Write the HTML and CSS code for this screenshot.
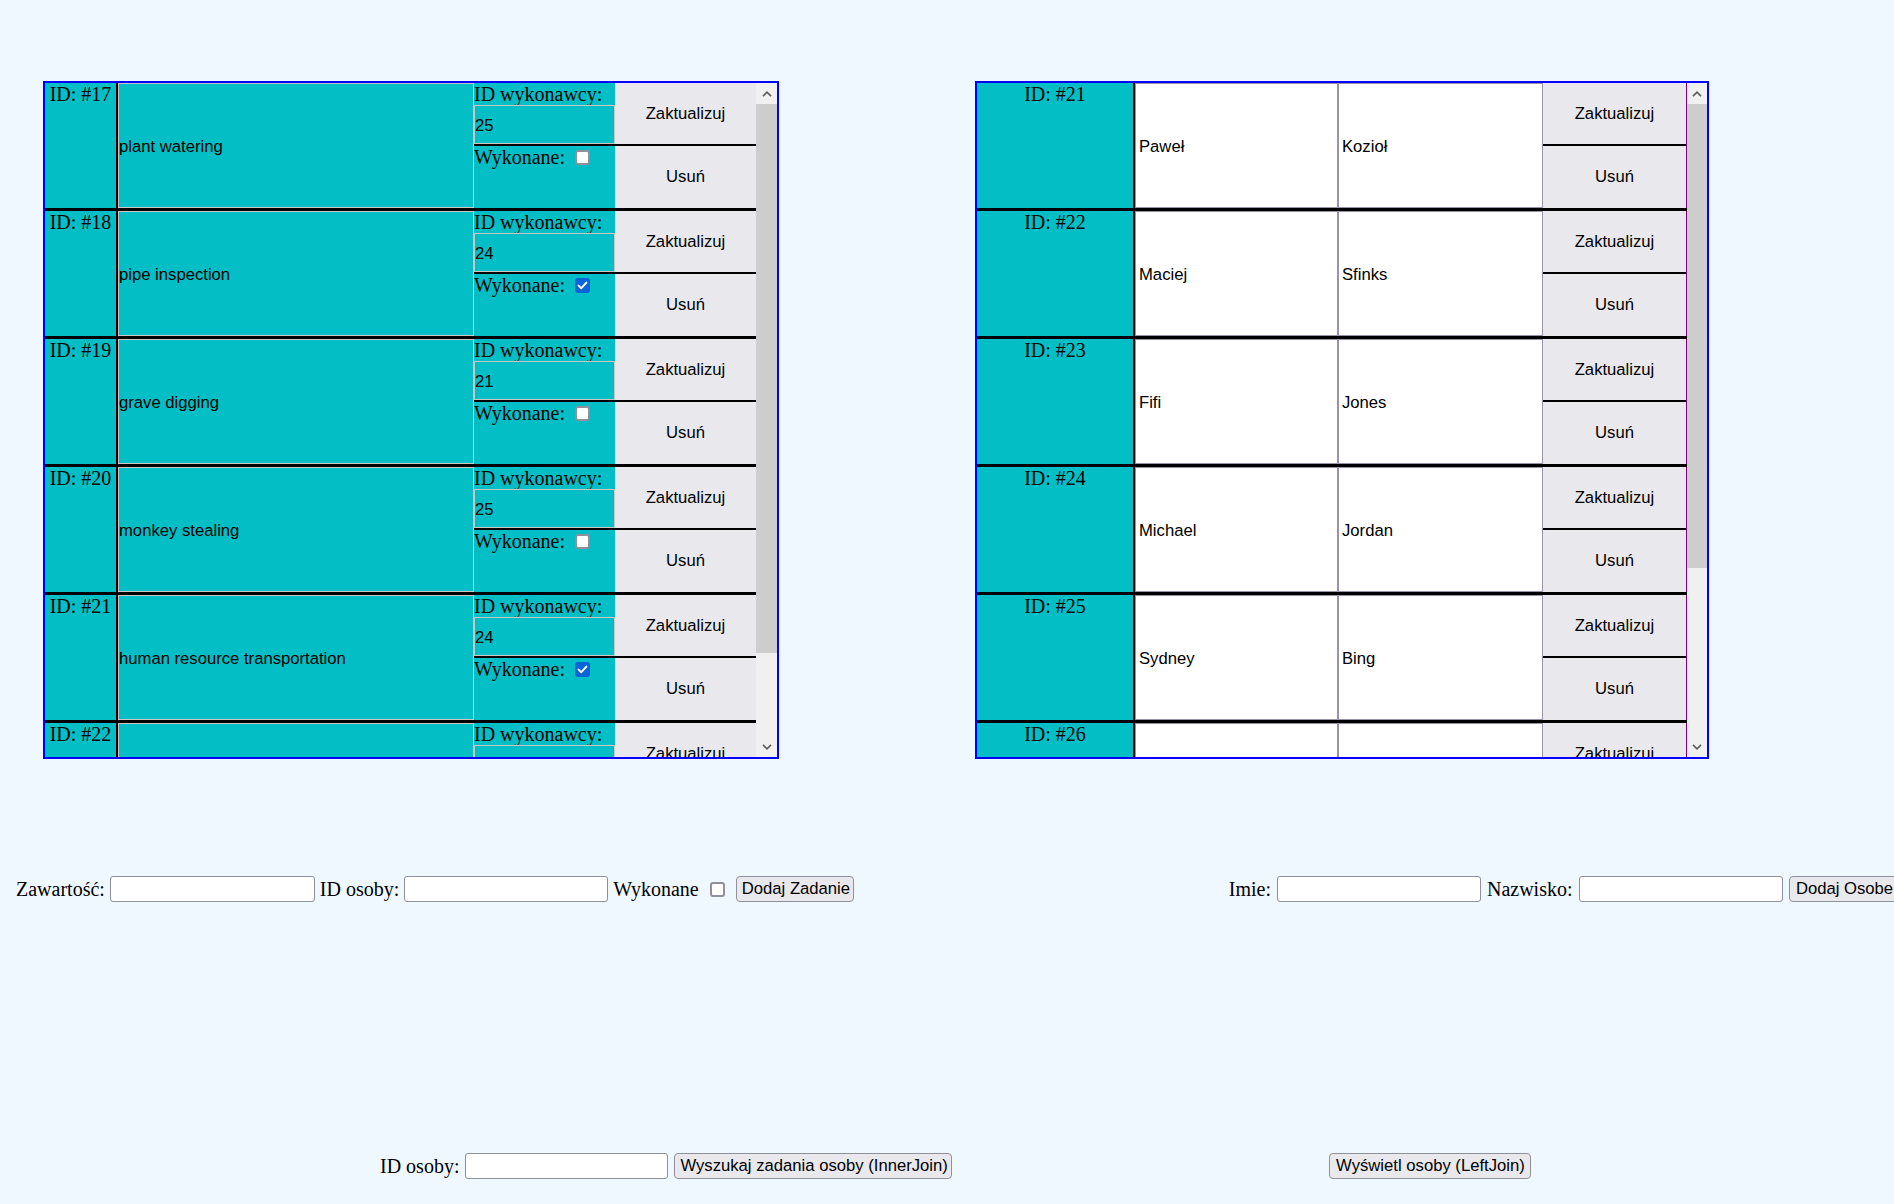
FILE: index.html
```html
<!DOCTYPE html>
<html lang="pl">
<head>
<meta charset="utf-8">
<title>Zadania i osoby</title>
<link rel="stylesheet" href="styles.css">
</head>
<body>
<div class="panels">
  <section class="panel panel-tasks">
    <div class="scroll">
      <div class="trow">
        <div class="tid">ID: #17</div>
        <input class="tin tin-content" value="plant watering">
        <div class="tside">
          <div class="half half-top">
            <div class="mid"><div class="lbl">ID wykonawcy:</div><input class="tin tin-id" value="25"></div>
            <button class="cellbtn">Zaktualizuj</button>
          </div>
          <div class="half half-bottom">
            <div class="mid mid-done"><span class="lbl">Wykonane:</span><span class="cb"></span></div>
            <button class="cellbtn">Usuń</button>
          </div>
        </div>
      </div>
      <div class="trow">
        <div class="tid">ID: #18</div>
        <input class="tin tin-content" value="pipe inspection">
        <div class="tside">
          <div class="half half-top">
            <div class="mid"><div class="lbl">ID wykonawcy:</div><input class="tin tin-id" value="24"></div>
            <button class="cellbtn">Zaktualizuj</button>
          </div>
          <div class="half half-bottom">
            <div class="mid mid-done"><span class="lbl">Wykonane:</span><span class="cb cb-on"><svg width="15" height="15" viewBox="0 0 15 15"><path d="M3.6 7.6 L6.3 10.2 L11.4 4.6" fill="none" stroke="#fff" stroke-width="2" stroke-linecap="round" stroke-linejoin="round"/></svg></span></div>
            <button class="cellbtn">Usuń</button>
          </div>
        </div>
      </div>
      <div class="trow">
        <div class="tid">ID: #19</div>
        <input class="tin tin-content" value="grave digging">
        <div class="tside">
          <div class="half half-top">
            <div class="mid"><div class="lbl">ID wykonawcy:</div><input class="tin tin-id" value="21"></div>
            <button class="cellbtn">Zaktualizuj</button>
          </div>
          <div class="half half-bottom">
            <div class="mid mid-done"><span class="lbl">Wykonane:</span><span class="cb"></span></div>
            <button class="cellbtn">Usuń</button>
          </div>
        </div>
      </div>
      <div class="trow">
        <div class="tid">ID: #20</div>
        <input class="tin tin-content" value="monkey stealing">
        <div class="tside">
          <div class="half half-top">
            <div class="mid"><div class="lbl">ID wykonawcy:</div><input class="tin tin-id" value="25"></div>
            <button class="cellbtn">Zaktualizuj</button>
          </div>
          <div class="half half-bottom">
            <div class="mid mid-done"><span class="lbl">Wykonane:</span><span class="cb"></span></div>
            <button class="cellbtn">Usuń</button>
          </div>
        </div>
      </div>
      <div class="trow">
        <div class="tid">ID: #21</div>
        <input class="tin tin-content" value="human resource transportation">
        <div class="tside">
          <div class="half half-top">
            <div class="mid"><div class="lbl">ID wykonawcy:</div><input class="tin tin-id" value="24"></div>
            <button class="cellbtn">Zaktualizuj</button>
          </div>
          <div class="half half-bottom">
            <div class="mid mid-done"><span class="lbl">Wykonane:</span><span class="cb cb-on"><svg width="15" height="15" viewBox="0 0 15 15"><path d="M3.6 7.6 L6.3 10.2 L11.4 4.6" fill="none" stroke="#fff" stroke-width="2" stroke-linecap="round" stroke-linejoin="round"/></svg></span></div>
            <button class="cellbtn">Usuń</button>
          </div>
        </div>
      </div>
      <div class="trow">
        <div class="tid">ID: #22</div>
        <input class="tin tin-content" value="">
        <div class="tside">
          <div class="half half-top">
            <div class="mid"><div class="lbl">ID wykonawcy:</div><input class="tin tin-id" value=""></div>
            <button class="cellbtn">Zaktualizuj</button>
          </div>
          <div class="half half-bottom">
            <div class="mid mid-done"><span class="lbl">Wykonane:</span><span class="cb"></span></div>
            <button class="cellbtn">Usuń</button>
          </div>
        </div>
      </div>
    </div>
    <div class="sbar">
      <div class="sb-arrow"><svg width="10" height="6" viewBox="0 0 10 6"><path d="M1 5.2 L5 1.2 L9 5.2" fill="none" stroke="#606060" stroke-width="1.7"/></svg></div>
      <div class="sb-track"><div class="sb-thumb thumb-tasks"></div></div>
      <div class="sb-arrow"><svg width="10" height="6" viewBox="0 0 10 6"><path d="M1 0.8 L5 4.8 L9 0.8" fill="none" stroke="#606060" stroke-width="1.7"/></svg></div>
    </div>
  </section>

  <section class="panel panel-people">
    <div class="scroll">
      <div class="prow">
        <div class="pid">ID: #21</div>
        <input class="pin pin-first" value="Paweł">
        <input class="pin pin-last" value="Kozioł">
        <div class="pbtns"><button class="cellbtn pb-top">Zaktualizuj</button><button class="cellbtn pb-bottom">Usuń</button></div>
      </div>
      <div class="prow">
        <div class="pid">ID: #22</div>
        <input class="pin pin-first" value="Maciej">
        <input class="pin pin-last" value="Sfinks">
        <div class="pbtns"><button class="cellbtn pb-top">Zaktualizuj</button><button class="cellbtn pb-bottom">Usuń</button></div>
      </div>
      <div class="prow">
        <div class="pid">ID: #23</div>
        <input class="pin pin-first" value="Fifi">
        <input class="pin pin-last" value="Jones">
        <div class="pbtns"><button class="cellbtn pb-top">Zaktualizuj</button><button class="cellbtn pb-bottom">Usuń</button></div>
      </div>
      <div class="prow">
        <div class="pid">ID: #24</div>
        <input class="pin pin-first" value="Michael">
        <input class="pin pin-last" value="Jordan">
        <div class="pbtns"><button class="cellbtn pb-top">Zaktualizuj</button><button class="cellbtn pb-bottom">Usuń</button></div>
      </div>
      <div class="prow">
        <div class="pid">ID: #25</div>
        <input class="pin pin-first" value="Sydney">
        <input class="pin pin-last" value="Bing">
        <div class="pbtns"><button class="cellbtn pb-top">Zaktualizuj</button><button class="cellbtn pb-bottom">Usuń</button></div>
      </div>
      <div class="prow">
        <div class="pid">ID: #26</div>
        <input class="pin pin-first" value="">
        <input class="pin pin-last" value="">
        <div class="pbtns"><button class="cellbtn pb-top">Zaktualizuj</button><button class="cellbtn pb-bottom">Usuń</button></div>
      </div>
    </div>
    <div class="sbar sbar-people">
      <div class="sb-arrow"><svg width="10" height="6" viewBox="0 0 10 6"><path d="M1 5.2 L5 1.2 L9 5.2" fill="none" stroke="#606060" stroke-width="1.7"/></svg></div>
      <div class="sb-track"><div class="sb-thumb thumb-people"></div></div>
      <div class="sb-arrow"><svg width="10" height="6" viewBox="0 0 10 6"><path d="M1 0.8 L5 4.8 L9 0.8" fill="none" stroke="#606060" stroke-width="1.7"/></svg></div>
    </div>
  </section>
</div>

<div class="forms">
  <form class="form form-task">
    <label class="flabel">Zawartość:</label>
    <input class="field field-content" type="text">
    <label class="flabel">ID osoby:</label>
    <input class="field field-pid" type="text">
    <label class="flabel">Wykonane</label>
    <span class="cb cb-form"></span>
    <button type="button" class="btn btn-add-task">Dodaj Zadanie</button>
  </form>
  <form class="form form-person">
    <label class="flabel">Imie:</label>
    <input class="field field-first" type="text">
    <label class="flabel">Nazwisko:</label>
    <input class="field field-last" type="text">
    <button type="button" class="btn btn-add-person">Dodaj Osobe</button>
  </form>
</div>

<div class="queries">
  <form class="form form-search">
    <label class="flabel">ID osoby:</label>
    <input class="field field-search" type="text">
    <button type="button" class="btn btn-inner">Wyszukaj zadania osoby (InnerJoin)</button>
  </form>
  <button type="button" class="btn btn-left">Wyświetl osoby (LeftJoin)</button>
</div>
</body>
</html>
```

FILE: styles.css
```css
* { box-sizing: border-box; }

html, body { margin: 0; padding: 0; }

body {
  width: 1894px;
  height: 1204px;
  overflow: hidden;
  background: #f0f8ff;
  color: #000;
  font-family: "Liberation Serif", "Times New Roman", serif;
  font-size: 20px;
}

input, button {
  font-family: "Liberation Sans", Arial, sans-serif;
  font-size: 16.67px;
  color: #000;
  margin: 0;
}

/* ---------- panels ---------- */
.panels {
  display: flex;
  align-items: flex-start;
  gap: 196px;
  padding: 81px 0 0 43px;
}

.panel {
  display: flex;
  height: 678px;
  border: 2px solid #0000ff;
}

.panel-tasks { width: 736px; }
.panel-people { width: 734px; }

.scroll {
  flex: 1;
  min-width: 0;
  overflow: hidden;
}

/* fake Windows-style scrollbar */
.sbar {
  width: 21px;
  flex: none;
  display: flex;
  flex-direction: column;
  background: #f0f0f0;
}
.sbar-people { width: 20px; }

.sb-arrow {
  height: 21px;
  flex: none;
  display: flex;
  align-items: center;
  justify-content: center;
}
.sb-track { flex: 1; }
.sb-thumb { background: #cdcdcd; }
.thumb-tasks { height: 549px; }
.thumb-people { height: 464px; }

/* ---------- task rows ---------- */
.trow {
  display: flex;
  height: 128px;
  border-bottom: 3px solid #000;
  background: #04bec6;
}

.tid {
  width: 73px;
  flex: none;
  border-right: 2px solid #000;
  text-align: center;
  line-height: 22px;
  white-space: nowrap;
}

.tin {
  display: block;
  background: #04bec6;
  border: 1px solid #c6c6c6;
  padding: 0;
  outline: none;
}

.tin-content {
  width: 356px;
  height: 125px;
  flex: none;
  padding-top: 2px;
}

.tside {
  width: 282px;
  flex: none;
  display: flex;
  flex-direction: column;
}

.half { display: flex; }
.half-top {
  height: 63px;
  border-bottom: 2px solid #000;
}
.half-bottom { height: 62px; }

.mid {
  width: 141px;
  flex: none;
  display: flex;
  flex-direction: column;
}

.lbl {
  line-height: 22px;
  white-space: nowrap;
}

.tin-id {
  width: 141px;
  height: 39px;
  padding-top: 3px;
}

.mid-done {
  flex-direction: row;
  align-items: center;
  height: 22px;
}

.cellbtn {
  flex: 1;
  border: none;
  background: #e9e9ed;
  padding: 0;
}

/* ---------- checkboxes ---------- */
.cb {
  display: inline-block;
  width: 15px;
  height: 15px;
  margin-left: 10px;
  border: 2px solid #8f8f9d;
  border-radius: 3px;
  background: #fff;
  flex: none;
}
.cb-on {
  border: none;
  background: #0b63d8;
}
.cb-on svg { display: block; }

/* ---------- people rows ---------- */
.prow {
  display: flex;
  height: 128px;
  border-bottom: 3px solid #000;
}

.pid {
  width: 158px;
  flex: none;
  background: #04bec6;
  border-right: 2px solid #000;
  text-align: center;
  line-height: 22px;
}

.pin {
  display: block;
  height: 125px;
  flex: none;
  background: #fff;
  border: 1px solid #9a93a6;
  padding: 2px 3px 0;
  outline: none;
}
.pin-first { width: 203px; }
.pin-last { width: 205px; }

.pbtns {
  width: 144px;
  flex: none;
  display: flex;
  flex-direction: column;
  border-right: 1px solid #800080;
}
.pb-top {
  flex: none;
  height: 63px;
  border-bottom: 2px solid #000;
}
.pb-bottom { flex: 1; }

/* ---------- forms ---------- */
.forms {
  display: flex;
  align-items: center;
  gap: 375px;
  margin-top: 117px;
  padding-left: 16px;
}

.form {
  display: flex;
  align-items: center;
  gap: 6px;
  white-space: nowrap;
}
.form-task { gap: 5px; }

.flabel { line-height: 26px; }

.field {
  height: 26px;
  background: #fff;
  border: 1px solid #8f8f9d;
  border-radius: 3px;
  padding: 0 3px;
}
.field-content { width: 205px; }
.field-pid { width: 204px; }
.field-first, .field-last { width: 204px; }
.field-search { width: 203px; }

.cb-form { margin: 0 6px 0 6px; }

.btn {
  height: 26px;
  background: #e9e9ed;
  border: 1px solid #8f8f9d;
  border-radius: 4px;
  padding: 0 5px;
  white-space: nowrap;
}
.btn-add-task { width: 118px; }
.btn-add-person { width: 112px; }
.btn-inner { width: 278px; }
.btn-left { width: 202px; }

.queries {
  display: flex;
  align-items: center;
  gap: 377px;
  margin-top: 251px;
  padding-left: 380px;
}
```
